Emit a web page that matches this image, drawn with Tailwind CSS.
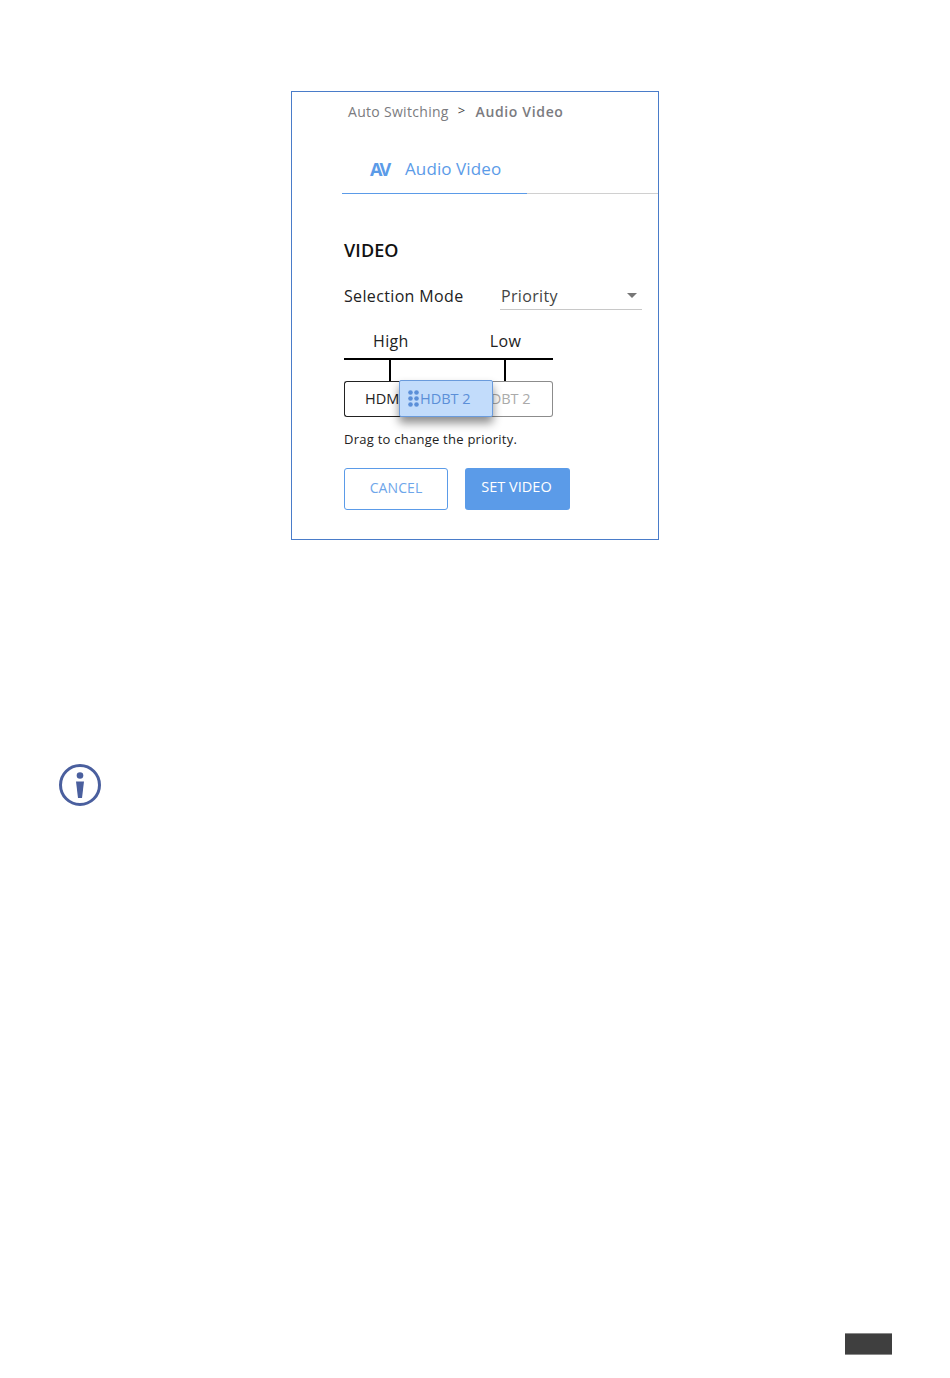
<!DOCTYPE html>
<html lang="en">
<head>
    <meta charset="UTF-8">
    <title>Audio Video</title>
    <script src="https://cdn.jsdelivr.net/npm/@tailwindcss/browser@4"></script>
</head>
<body class="bg-white font-['Open_Sans',sans-serif] w-[950px] h-[1378px] overflow-hidden">
    <!-- Screenshot frame -->
    <div class="ml-[291px] mt-[91px] w-[368px] h-[449px] border border-[#4a7cc9] pt-[10px]">
        <!-- Breadcrumb -->
        <div class="ml-[56px] flex items-center h-[18px] text-[14px] tracking-[0.3px] text-[#7b7b80]">
            <span>Auto Switching</span>
            <span class="ml-[9px] text-[#444] text-[13px]">&gt;</span>
            <span class="ml-[10px] font-semibold tracking-[0.65px]">Audio Video</span>
        </div>

        <!-- Tab -->
        <div class="ml-[50px] mt-[39px] h-[35px] border-b border-[#d0d0d0] flex items-start">
            <div class="w-[185px] h-[35px] border-b border-[#5b9be8] flex items-start pl-[28px] text-[#5b9be8]">
                <span class="w-[20px] text-[18px] leading-[20px] font-bold tracking-[-3px]">AV</span>
                <span class="ml-[15px] text-[17px] leading-[20px] tracking-[0.1px]">Audio Video</span>
            </div>
        </div>

        <div class="ml-[52px] w-[298px]">
            <div class="mt-[44px] text-[18px] leading-[24px] font-semibold tracking-[0.1px] text-[#111]">VIDEO</div>

            <!-- Selection mode -->
            <div class="mt-[23px] flex items-start">
                <span class="w-[156px] text-[16px] leading-[22px] tracking-[0.35px] text-[#222]">Selection Mode</span>
                <div class="w-[142px] h-[25px] border-b border-[#c8c8c8] flex justify-between pl-[1px] pr-[5px] text-[16px] leading-[22px] tracking-[0.35px] text-[#444]">
                    <span>Priority</span>
                    <span class="mt-[8px] w-0 h-0 border-x-[5px] border-t-[5px] border-x-transparent border-t-[#777]"></span>
                </div>
            </div>

            <!-- Priority diagram -->
            <div class="mt-[20px] w-[209px] relative">
                <div class="flex h-[28px] text-[16px] leading-[22px] tracking-[0.35px] text-[#222]">
                    <span class="ml-[29px]">High</span>
                    <span class="ml-[81px]">Low</span>
                </div>
                <div class="h-[2px] bg-black"></div>
                <div class="h-[21px] flex">
                    <div class="ml-[45px] w-[2px] bg-black"></div>
                    <div class="ml-[113px] w-[2px] bg-black"></div>
                </div>
                <div class="h-[36px] flex text-[14.5px] leading-[34px]">
                    <div class="w-[92px] rounded-l-[3px] border border-r-0 border-[#222] pl-[20px] text-[#222] overflow-hidden whitespace-nowrap">HDMI</div>
                    <div class="w-[117px] rounded-r-[3px] border border-l-0 border-[#8c8c8c] pl-[44px] text-[#aaa] whitespace-nowrap">HDBT 2</div>
                </div>
                <!-- Dragged item -->
                <div class="absolute left-[55px] top-[50px] w-[94px] h-[37px] bg-[#c2dcfb] border border-[#6a9bdc] rounded-[2px] shadow-[0_6px_10px_rgba(0,0,0,0.45)] flex items-center pl-[8px] text-[14.5px] text-[#5b8fd8]">
                    <svg width="11" height="17" viewBox="0 0 11 17" fill="#5b8fd8">
                        <circle cx="2.5" cy="2.5" r="2.3"/><circle cx="8.5" cy="2.5" r="2.3"/>
                        <circle cx="2.5" cy="8.5" r="2.3"/><circle cx="8.5" cy="8.5" r="2.3"/>
                        <circle cx="2.5" cy="14.5" r="2.3"/><circle cx="8.5" cy="14.5" r="2.3"/>
                    </svg>
                    <span class="ml-[1px]">HDBT 2</span>
                </div>
            </div>

            <div class="mt-[13px] text-[13px] leading-[18px] tracking-[0.25px] text-[#222]">Drag to change the priority.</div>

            <!-- Buttons -->
            <div class="mt-[20px] flex gap-[17px] text-[14px]">
                <button class="w-[104px] h-[42px] pb-[4px] rounded-[3px] border border-[#5b9be8] text-[#6ea6ea] tracking-[0.1px]">CANCEL</button>
                <button class="w-[105px] h-[42px] pb-[4px] pr-[2px] rounded-[3px] bg-[#5b9be8] text-white text-[14.5px]">SET VIDEO</button>
            </div>
        </div>
    </div>

    <!-- Info icon -->
    <svg class="ml-[58px] mt-[223px]" width="44" height="44" viewBox="0 0 44 44">
        <circle cx="22" cy="22" r="19.5" fill="none" stroke="#4a5f9e" stroke-width="3"/>
        <circle cx="22" cy="12.5" r="3.3" fill="#4a5f9e"/>
        <path d="M18 18.5H26L24 35H20Z" fill="#4a5f9e"/>
    </svg>

    <!-- Page number block -->
    <div class="ml-[845px] mt-[526px] w-[47px] h-[22px] bg-[#3f3f3f] border-y border-[#8a8a8a]"></div>
</body>
</html>
